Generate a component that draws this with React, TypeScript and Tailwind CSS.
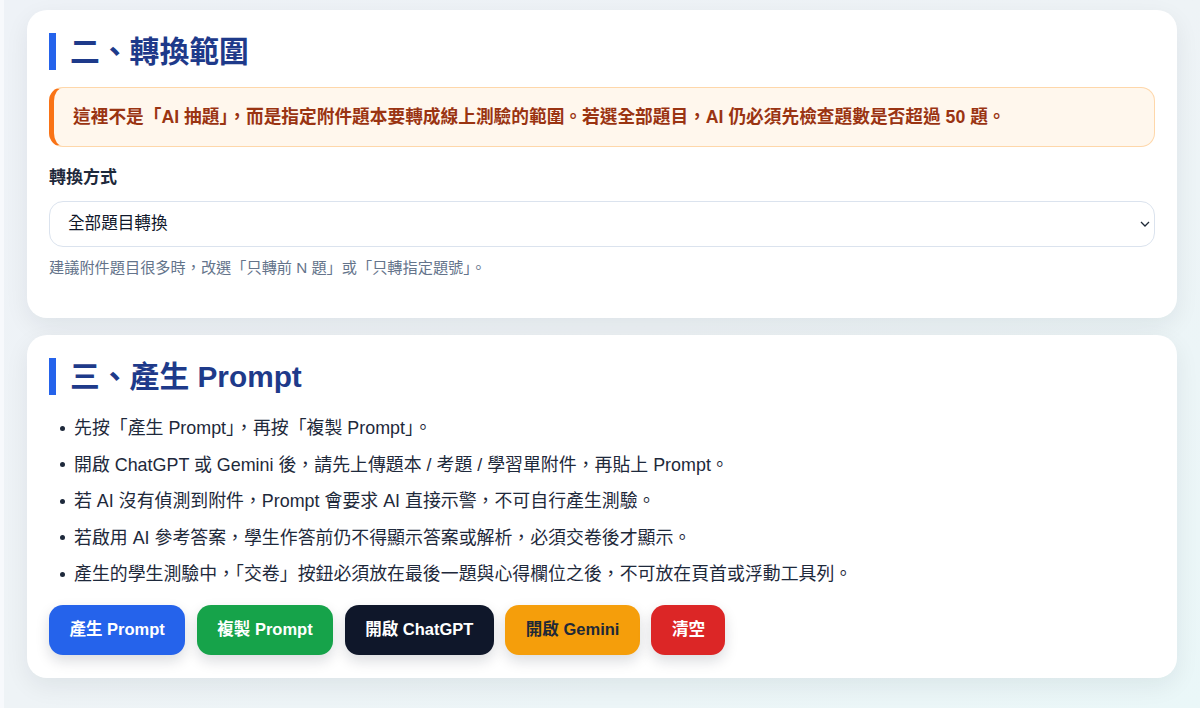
import React from 'react';

const font = { fontFamily: '"Liberation Sans", "Noto Sans CJK TC", sans-serif' };

const SectionTitle: React.FC<{ children: React.ReactNode }> = ({ children }) => (
  <h2 className="border-l-[7px] border-[#2563eb] pl-[14px] text-[29.8px] leading-[37px] font-bold text-[#1e3a8a]">
    {children}
  </h2>
);

const tips = [
  '先按「產生 Prompt」，再按「複製 Prompt」。',
  '開啟 ChatGPT 或 Gemini 後，請先上傳題本 / 考題 / 學習單附件，再貼上 Prompt。',
  '若 AI 沒有偵測到附件，Prompt 會要求 AI 直接示警，不可自行產生測驗。',
  '若啟用 AI 參考答案，學生作答前仍不得顯示答案或解析，必須交卷後才顯示。',
  '產生的學生測驗中，「交卷」按鈕必須放在最後一題與心得欄位之後，不可放在頁首或浮動工具列。',
];

const buttons = [
  { label: '產生 Prompt', cls: 'bg-[#2563eb] text-white' },
  { label: '複製 Prompt', cls: 'bg-[#16a34a] text-white' },
  { label: '開啟 ChatGPT', cls: 'bg-[#0f172a] text-white' },
  { label: '開啟 Gemini', cls: 'bg-[#f59e0b] text-[#1f2937]' },
  { label: '清空', cls: 'bg-[#dc2626] text-white' },
];

const App: React.FC = () => {
  return (
    <div
      className="flex h-[708px] overflow-hidden bg-gradient-to-br from-[#eef2f7] via-[#eef3f6] to-[#eaf7f8]"
      style={font}
    >
      <div className="w-[4px] shrink-0 bg-[#f7f9fc]" />
      <div className="flex-1 pt-[10px]">
        <div className="mx-auto flex w-[1150px] flex-col gap-[17px]">
          {/* section 2: range */}
          <section className="rounded-[20px] bg-white px-[22px] pt-[23px] pb-[40px] shadow-[0_8px_24px_rgba(15,23,42,0.07)]">
            <SectionTitle>二、轉換範圍</SectionTitle>
            <div className="mt-[17px] rounded-[14px] border border-[#fed7aa] border-l-[5px] border-l-[#f97316] bg-[#fff7ed] px-[19px] py-[17px] text-[17.7px] leading-[24px] font-bold text-[#9a3412]">
              這裡不是「AI 抽題」，而是指定附件題本要轉成線上測驗的範圍。若選全部題目，AI 仍必須先檢查題數是否超過 50 題。
            </div>
            <label className="mt-[20px] block text-[17px] leading-[22px] font-bold text-[#1e293b]">轉換方式</label>
            <div className="relative mt-[12px]">
              <select
                className="h-[46px] w-full appearance-none rounded-[14px] border border-[#dbe3ee] bg-white px-[18px] text-[16.6px] text-[#0f172a] outline-none"
                style={font}
                defaultValue="all"
              >
                <option value="all">全部題目轉換</option>
                <option value="first">只轉前 N 題</option>
                <option value="pick">只轉指定題號</option>
              </select>
              <svg
                className="pointer-events-none absolute top-1/2 right-[5px] -translate-y-1/2"
                width="10"
                height="6"
                viewBox="0 0 10 6"
                fill="none"
              >
                <path d="M1 1l4 4 4-4" stroke="#1f2937" strokeWidth="1.3" />
              </svg>
            </div>
            <p className="mt-[11px] text-[15.2px] leading-[20px] text-[#64748b]">
              建議附件題目很多時，改選「只轉前 N 題」或「只轉指定題號」。
            </p>
          </section>

          {/* section 3: prompt */}
          <section className="rounded-[20px] bg-white px-[22px] pt-[23px] pb-[23px] shadow-[0_8px_24px_rgba(15,23,42,0.07)]">
            <SectionTitle>三、產生 Prompt</SectionTitle>
            <ul className="mt-[15px] flex flex-col text-[17.9px] leading-[36.5px] text-[#1e293b]">
              {tips.map((t) => (
                <li key={t} className="flex items-center pl-[11px]">
                  <span className="mr-[9px] h-[5px] w-[5px] rounded-full bg-[#1e293b]" />
                  {t}
                </li>
              ))}
            </ul>
            <div className="mt-[12px] flex gap-[11.5px]">
              {buttons.map((b) => (
                <button
                  key={b.label}
                  className={`h-[50px] rounded-[14px] px-[20.5px] text-[16.5px] font-bold shadow-[0_6px_14px_rgba(15,23,42,0.15)] ${b.cls}`}
                >
                  {b.label}
                </button>
              ))}
            </div>
          </section>
        </div>
      </div>
    </div>
  );
};

export default App;
